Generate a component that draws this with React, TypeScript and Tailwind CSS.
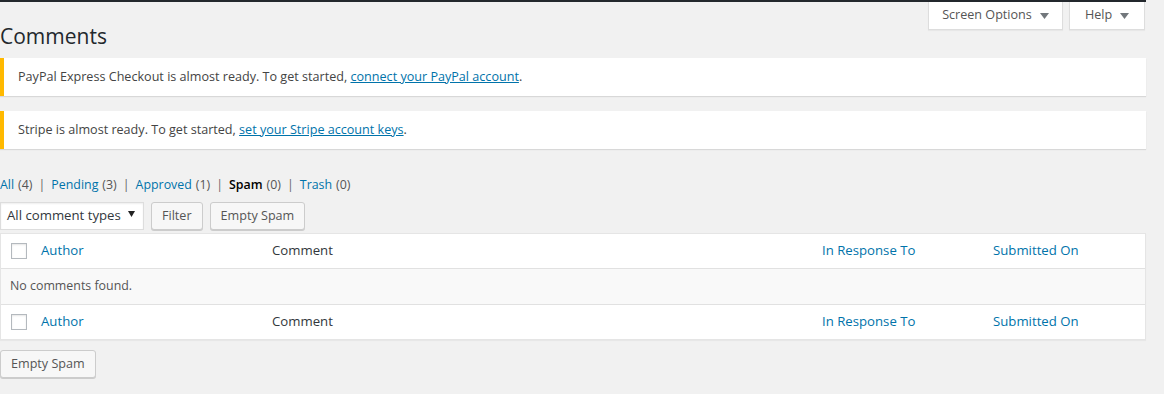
import * as React from "react";

const Caret = () => (
  <svg width="9" height="6" viewBox="0 0 9 6" className="ml-[8px] inline-block">
    <path d="M0 0h9L4.5 6z" fill="#72777c" />
  </svg>
);

const Checkbox = () => (
  <span className="block h-4 w-4 border border-[#b4b9be] bg-white shadow-[inset_0_1px_2px_rgba(0,0,0,0.1)]" />
);

const Button = ({ children }: { children: React.ReactNode }) => (
  <button
    type="button"
    className="h-[28px] rounded-[3px] border border-[#ccc] bg-[#f7f7f7] px-[10px] text-[12.6px] leading-[26px] text-[#555] shadow-[0_1px_0_#ccc]"
  >
    {children}
  </button>
);

const Notice = ({ children }: { children: React.ReactNode }) => (
  <div className="flex h-[38px] items-center border-l-4 border-[#ffb900] bg-white pl-[14px] text-[12.6px] text-[#444] shadow-[0_1px_1px_rgba(0,0,0,0.1)]">
    {children}
  </div>
);

const HeaderRow = () => (
  <div className="flex h-[34px] items-center text-[13.2px]">
    <div className="w-[40px] pl-[10px]">
      <Checkbox />
    </div>
    <div className="w-[231px] text-[#0073aa]">Author</div>
    <div className="w-[550px] text-[#32373c]">Comment</div>
    <div className="w-[171px] text-[#0073aa]">In Response To</div>
    <div className="text-[#0073aa]">Submitted On</div>
  </div>
);

const filters = [
  { label: "All", count: 4 },
  { label: "Pending", count: 3 },
  { label: "Approved", count: 1 },
  { label: "Spam", count: 0, current: true },
  { label: "Trash", count: 0 },
];

export default function App() {
  return (
    <div
      className="min-h-[394px] bg-[#f1f1f1] pr-[18px] text-[#444]"
      style={{ fontFamily: '"Open Sans", "Noto Sans", sans-serif' }}
    >
      <div className="h-[2px] bg-[#23282d]" />
      <div className="flex justify-end gap-[6px] pr-[1px]">
        <div className="flex h-[28px] w-[135px] items-center justify-center border border-t-0 border-[#ddd] bg-white text-[12.6px] text-[#555] shadow-[0_1px_1px_rgba(0,0,0,0.04)]">
          Screen Options
          <Caret />
        </div>
        <div className="flex h-[28px] w-[76px] items-center justify-center border border-t-0 border-[#ddd] bg-white text-[12.6px] text-[#555] shadow-[0_1px_1px_rgba(0,0,0,0.04)]">
          Help
          <Caret />
        </div>
      </div>
      <h1 className="-mt-[8px] text-[21px] leading-[29px] font-normal text-[#23282d]">Comments</h1>

      <div className="mt-[7px] flex flex-col gap-[15px]">
        <Notice>
          PayPal Express Checkout is almost ready. To get started,&nbsp;
          <a className="text-[#0073aa] underline">connect your PayPal account</a>.
        </Notice>
        <Notice>
          Stripe is almost ready. To get started,&nbsp;
          <a className="text-[#0073aa] underline">set your Stripe account keys</a>.
        </Notice>
      </div>

      <ul className="mt-[26px] flex text-[12.4px] leading-[20px] text-[#666]">
        {filters.map((f, i) => (
          <li key={f.label} className="flex">
            {f.current ? (
              <span className="font-semibold text-black">{f.label}</span>
            ) : (
              <a className="text-[#0073aa]">{f.label}</a>
            )}
            <span className="ml-[4px] text-[#555]">({f.count})</span>
            {i < filters.length - 1 && <span className="mx-[6px] text-[#666]">|</span>}
          </li>
        ))}
      </ul>

      <div className="mt-[7px] flex items-center gap-[7px]">
        <div className="flex h-[28px] w-[144px] items-center justify-between border border-[#ddd] bg-white pl-[6px] pr-[8px] text-[13.2px] text-[#32373c] shadow-[inset_0_1px_2px_rgba(0,0,0,0.07)]">
          All comment types
          <svg width="7" height="6" viewBox="0 0 7 6" className="-mt-[4px]">
            <path d="M0 0h7L3.5 6z" fill="#222" />
          </svg>
        </div>
        <Button>Filter</Button>
        <Button>Empty Spam</Button>
      </div>

      <div className="mt-[3px] border border-[#e5e5e5] bg-white shadow-[0_1px_1px_rgba(0,0,0,0.04)]">
        <div className="border-b border-[#e1e1e1]">
          <HeaderRow />
        </div>
        <div className="flex h-[35px] items-center bg-[#f9f9f9] pl-[9px] text-[12.4px] text-[#555]">
          No comments found.
        </div>
        <div className="border-t border-[#e1e1e1]">
          <HeaderRow />
        </div>
      </div>

      <div className="mt-[10px]">
        <Button>Empty Spam</Button>
      </div>
    </div>
  );
}
